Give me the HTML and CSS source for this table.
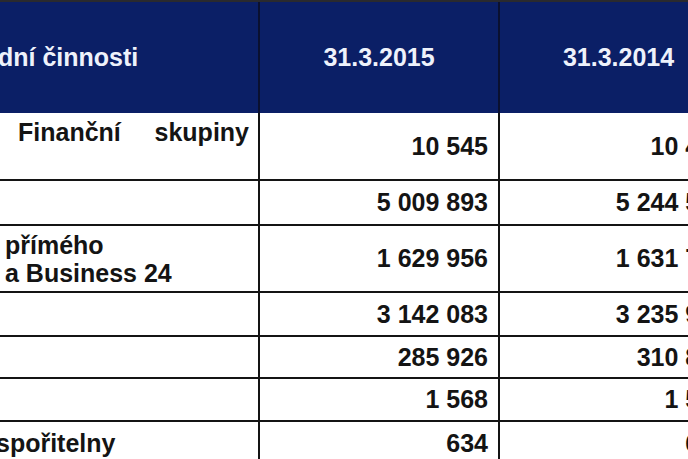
FILE: index.html
```html
<!DOCTYPE html>
<html lang="cs">
<head>
<meta charset="utf-8">
<title>Tabulka</title>
<link rel="stylesheet" href="styles.css">
</head>
<body>
<div class="sheet">
  <div class="row head">
    <div class="cell label"><span class="shift-head">dní činnosti</span></div>
    <div class="cell hnum">31.3.2015</div>
    <div class="cell hnum">31.3.2014</div>
  </div>
  <div class="row r1">
    <div class="cell label top"><div class="just">Finanční skupiny</div></div>
    <div class="cell num">10 545</div>
    <div class="cell num">10 472</div>
  </div>
  <div class="row r2">
    <div class="cell label"></div>
    <div class="cell num">5 009 893</div>
    <div class="cell num">5 244 518</div>
  </div>
  <div class="row r3">
    <div class="cell label two"><div>přímého</div><div>a Business 24</div></div>
    <div class="cell num">1 629 956</div>
    <div class="cell num">1 631 743</div>
  </div>
  <div class="row r4">
    <div class="cell label"></div>
    <div class="cell num">3 142 083</div>
    <div class="cell num">3 235 921</div>
  </div>
  <div class="row r5">
    <div class="cell label"></div>
    <div class="cell num">285 926</div>
    <div class="cell num">310 852</div>
  </div>
  <div class="row r6">
    <div class="cell label"></div>
    <div class="cell num">1 568</div>
    <div class="cell num">1 574</div>
  </div>
  <div class="row r7">
    <div class="cell label"><span class="shift-last">spořitelny</span></div>
    <div class="cell num">634</div>
    <div class="cell num">612</div>
  </div>
</div>
</body>
</html>
```
FILE: styles.css
```css
html, body {
  margin: 0;
  padding: 0;
  overflow: hidden;
  background: #ffffff;
}

.sheet {
  width: 737px;
  border-top: 2px solid #2a2a2e;
  font-family: "Liberation Sans", Arial, sans-serif;
  font-weight: bold;
  font-size: 25px;
  color: #141414;
}

.row {
  display: grid;
  grid-template-columns: 258px 240px 239px;
  border-bottom: 2px solid #141414;
  box-sizing: border-box;
}

.cell {
  display: flex;
  align-items: center;
  box-sizing: border-box;
  white-space: nowrap;
}

.head {
  height: 111px;
  background: #0b1f66;
  color: #eef2fb;
  border-bottom: 0;
}

.head .hnum {
  justify-content: center;
  border-left: 2px solid #0a1030;
}

.shift-head {
  margin-left: -2px;
}

.num {
  justify-content: flex-end;
  padding-right: 10px;
  border-left: 2px solid #141414;
}

.label.top {
  align-items: flex-start;
  padding-top: 6px;
}

.just {
  width: 100%;
  line-height: 27px;
  padding: 0 9px 0 18px;
  text-align: justify;
  text-align-last: justify;
  box-sizing: border-box;
}

.label.two {
  flex-direction: column;
  align-items: flex-start;
  justify-content: center;
  padding-left: 5px;
  line-height: 28px;
}

.shift-last {
  margin-left: -4px;
}

.r1 { height: 68px; }
.r2 { height: 45px; }
.r3 { height: 67px; }
.r4 { height: 44px; }
.r5 { height: 42px; }
.r6 { height: 43px; }
.r7 { height: 42px; border-bottom: 0; }
```
